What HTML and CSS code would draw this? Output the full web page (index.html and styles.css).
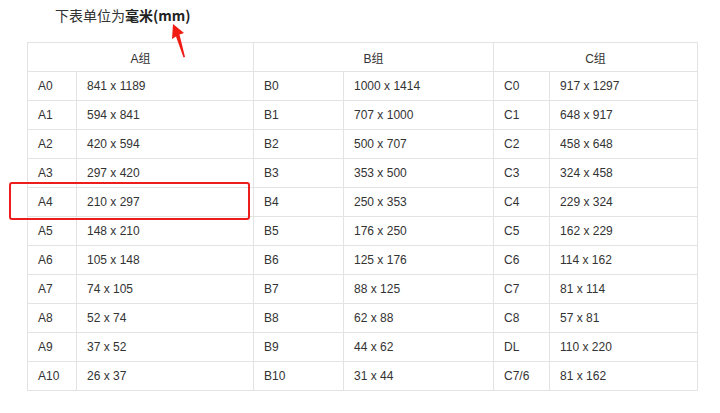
FILE: index.html
```html
<!DOCTYPE html>
<html lang="zh">
<head>
<meta charset="utf-8">
<link rel="stylesheet" href="styles.css">
</head>
<body>
<div class="page">
  <div class="title">下表单位为<b>毫米(mm)</b></div>
  <table class="sizes">
    <colgroup>
      <col class="c-name-a"><col class="c-val-a">
      <col class="c-name-b"><col class="c-val-b">
      <col class="c-name-c"><col class="c-val-c">
    </colgroup>
    <thead>
      <tr><th colspan="2">A组</th><th colspan="2">B组</th><th colspan="2">C组</th></tr>
    </thead>
    <tbody>
      <tr><td>A0</td><td>841 x 1189</td><td>B0</td><td>1000 x 1414</td><td>C0</td><td>917 x 1297</td></tr>
      <tr><td>A1</td><td>594 x 841</td><td>B1</td><td>707 x 1000</td><td>C1</td><td>648 x 917</td></tr>
      <tr><td>A2</td><td>420 x 594</td><td>B2</td><td>500 x 707</td><td>C2</td><td>458 x 648</td></tr>
      <tr><td>A3</td><td>297 x 420</td><td>B3</td><td>353 x 500</td><td>C3</td><td>324 x 458</td></tr>
      <tr><td>A4</td><td>210 x 297</td><td>B4</td><td>250 x 353</td><td>C4</td><td>229 x 324</td></tr>
      <tr><td>A5</td><td>148 x 210</td><td>B5</td><td>176 x 250</td><td>C5</td><td>162 x 229</td></tr>
      <tr><td>A6</td><td>105 x 148</td><td>B6</td><td>125 x 176</td><td>C6</td><td>114 x 162</td></tr>
      <tr><td>A7</td><td>74 x 105</td><td>B7</td><td>88 x 125</td><td>C7</td><td>81 x 114</td></tr>
      <tr><td>A8</td><td>52 x 74</td><td>B8</td><td>62 x 88</td><td>C8</td><td>57 x 81</td></tr>
      <tr><td>A9</td><td>37 x 52</td><td>B9</td><td>44 x 62</td><td>DL</td><td>110 x 220</td></tr>
      <tr><td>A10</td><td>26 x 37</td><td>B10</td><td>31 x 44</td><td>C7/6</td><td>81 x 162</td></tr>
    </tbody>
  </table>
  <div class="highlight"></div>
  <svg class="arrow" width="30" height="40" viewBox="0 0 30 40">
    <path d="M10 1 L21 10 L16.5 11.5 L22 34 L20.5 34.5 L13 13.5 L9 16 Z" fill="#f01c14"/>
  </svg>
</div>
</body>
</html>
```
FILE: styles.css
```css
html, body {
  margin: 0;
  padding: 0;
  background: #ffffff;
}
.page {
  position: relative;
  width: 720px;
  height: 413px;
  font-family: "Liberation Sans", "Noto Sans CJK SC", sans-serif;
  color: #333333;
}
.title {
  height: 30px;
  line-height: 30px;
  padding-left: 55px;
  font-size: 14px;
  color: #333333;
  font-family: "Noto Sans CJK SC", "Liberation Sans", sans-serif;
}
.title b {
  font-weight: bold;
  color: #222222;
}
.sizes {
  margin: 12px 0 0 27px;
  border-collapse: collapse;
  table-layout: fixed;
  width: 670px;
  font-size: 12px;
}
.c-name-a { width: 49px; }
.c-val-a { width: 177px; }
.c-name-b { width: 90px; }
.c-val-b { width: 150px; }
.c-name-c { width: 56px; }
.c-val-c { width: 148px; }
.sizes th, .sizes td {
  border: 1px solid #e3e3e3;
  height: 29px;
  padding: 0 0 0 10px;
  box-sizing: border-box;
  font-weight: normal;
  white-space: nowrap;
}
.sizes th {
  text-align: center;
  padding: 0;
}
.sizes td {
  text-align: left;
}
.highlight {
  position: absolute;
  left: 9px;
  top: 182px;
  width: 237px;
  height: 34px;
  border: 2.5px solid #ee1d1d;
  border-radius: 3px;
}
.arrow {
  position: absolute;
  left: 163px;
  top: 23px;
}
```
